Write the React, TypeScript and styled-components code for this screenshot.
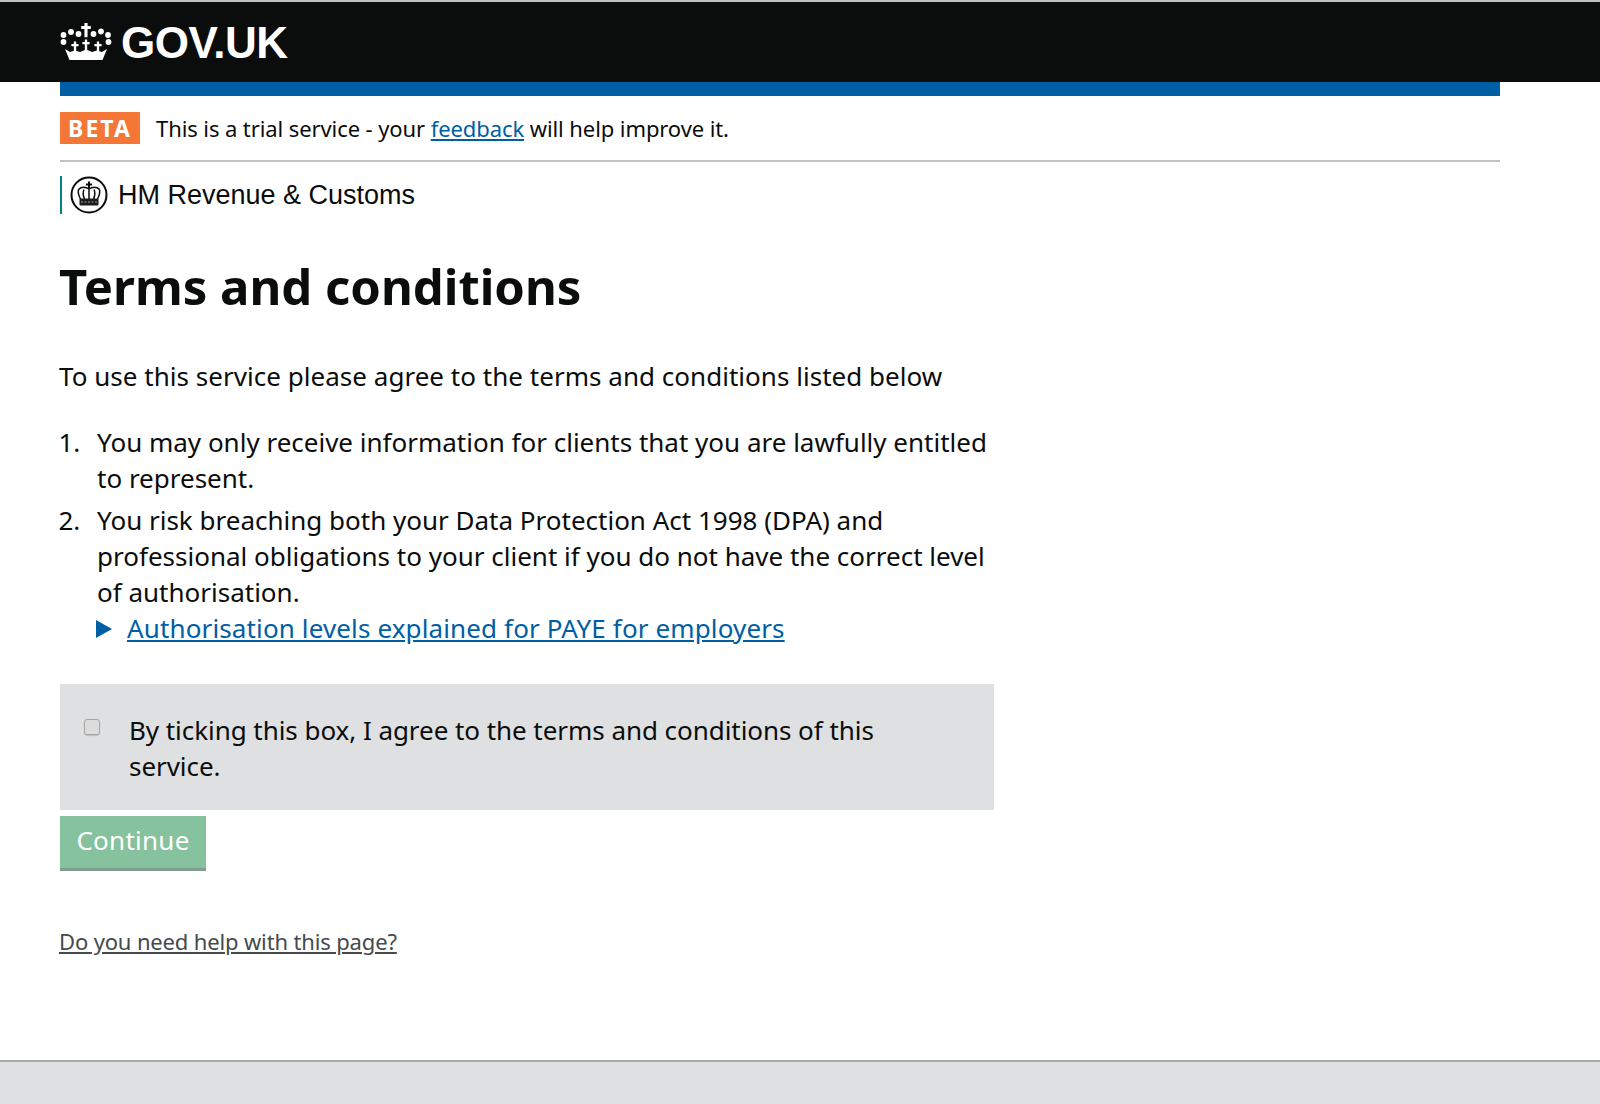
import React from "react";
import styled, { createGlobalStyle } from "styled-components";

const Global = createGlobalStyle`
  html, body { margin: 0; padding: 0; background: #fff; }
  body { font-family: "Noto Sans", "Liberation Sans", sans-serif; color: #0b0c0c; }
`;
const Page = styled.div`
  height: 1104px;
  display: flex;
  flex-direction: column;
  overflow: hidden;
`;
const Header = styled.header`
  height: 80px;
  background: #0b0c0c;
  border-top: 2px solid #bfc1c3;
  display: flex;
  align-items: center;
  padding-left: 60px;
  gap: 9px;
`;
const Wordmark = styled.span`
  color: #fff;
  font-family: "Liberation Sans", sans-serif;
  font-weight: 700;
  font-size: 44px;
  line-height: 1;
  letter-spacing: -0.5px;
  padding-top: 2px;
`;
const Container = styled.main`
  width: 1440px;
  margin-left: 60px;
  flex: 1;
`;
const BlueBar = styled.div`
  height: 14px;
  background: #005ea5;
`;
const Phase = styled.div`
  height: 66px;
  padding-top: 16px;
  box-sizing: border-box;
  border-bottom: 2px solid #bfc1c3;
  display: flex;
  align-items: flex-start;
  gap: 16px;
`;
const Tag = styled.strong`
  width: 80px;
  height: 32px;
  background: #f47738;
  color: #fff;
  font-size: 23px;
  font-weight: 700;
  line-height: 32px;
  letter-spacing: 2px;
  text-align: center;
`;
const PhaseText = styled.span`
  font-size: 22px;
  line-height: 32px;
  letter-spacing: -0.09px;
`;
const Link = styled.a`
  color: #005ea5;
  text-decoration: underline;
`;
const Org = styled.div`
  margin-top: 14px;
  height: 38px;
  border-left: 2px solid #00857d;
  display: flex;
  align-items: center;
  padding-left: 8px;
  gap: 10px;
  font-family: "Liberation Sans", sans-serif;
  font-size: 27px;
`;
const Title = styled.h1`
  margin: 44px 0 0 -1px;
  font-size: 49px;
  line-height: 56px;
  font-weight: 700;
`;
const Content = styled.div`
  width: 934px;
`;
const Intro = styled.p`
  margin: 44px 0 0 -1px;
  font-size: 26px;
  line-height: 36px;
  letter-spacing: 0.03px;
`;
const Steps = styled.ol`
  margin: 30px 0 0;
  padding: 0 0 0 27px;
  font-size: 26px;
  line-height: 36px;
`;
const Step = styled.li`
  margin-bottom: 6px;
  padding-left: 10px;
`;
const Details = styled.div`
  display: flex;
  align-items: center;
  gap: 15px;
  letter-spacing: 0.13px;
`;
const Triangle = styled.span`
  width: 0;
  height: 0;
  margin: 2px 0 0 -1px;
  border-left: 16px solid #005ea5;
  border-top: 9px solid transparent;
  border-bottom: 9px solid transparent;
`;
const Panel = styled.label`
  margin-top: 38px;
  height: 126px;
  box-sizing: border-box;
  background: #dee0e2;
  padding: 28px 60px 0 24px;
  display: flex;
  gap: 29px;
  font-size: 26px;
  line-height: 36px;
  letter-spacing: -0.05px;
`;
const Box = styled.input`
  appearance: none;
  box-sizing: border-box;
  width: 16px;
  height: 16px;
  margin: 7px 0 0;
  flex: none;
  background: #dcdcdc;
  border: 1px solid #a6a6a6;
  border-radius: 3px;
  box-shadow: 0 1px 1px rgba(0, 0, 0, 0.15);
`;
const Button = styled.button`
  display: block;
  margin-top: 6px;
  width: 146px;
  height: 55px;
  box-sizing: border-box;
  border: 0;
  border-bottom: 3px solid #7f9e8d;
  background: #85c29d;
  color: #fff;
  font-family: inherit;
  font-size: 26px;
  letter-spacing: 0.25px;
  padding: 0 0 4px;
`;
const Help = styled.a`
  display: block;
  margin-top: 56px;
  margin-left: -1px;
  font-size: 22px;
  line-height: 28px;
  letter-spacing: -0.15px;
  color: #454a4c;
  text-decoration: underline;
`;
const Footer = styled.footer`
  height: 42px;
  background: #dee0e2;
  border-top: 2px solid #a1acb2;
`;

const Cross = ({ x, y, s = 1 }: { x: number; y: number; s?: number }) => (
  <path
    transform={`translate(${x} ${y}) scale(${s})`}
    d="M-1.300-6h2.600v2.600H4v2.600H1.300V6h-2.600V-.8H-4v-2.600h2.700z"
  />
);
const Crown = () => (
  <svg width="52" height="38" viewBox="0 0 52 38" fill="#fff" aria-hidden="true">
    <Cross x={26} y={7} s={1.2} />
    {[[3.5, 12], [11, 9], [18.5, 11], [33.5, 11], [41, 8.5], [48, 12], [3.5, 19], [48.5, 19]].map(([cx, cy]) => (
      <circle key={`${cx}-${cy}`} cx={cx} cy={cy} r="2.900" />
    ))}
    <Cross x={15} y={24} s={0.9} />
    <Cross x={26} y={22} s={0.9} />
    <Cross x={38} y={24} s={0.9} />
    <path d="M5 26l5 3 5-1.500 5 1.500 6-2.500 6 2.500 5-1.500 5 1.500 5-3-4.500 11H9.500z" />
  </svg>
);
const Roundel = () => (
  <svg width="38" height="38" viewBox="0 0 38 38" aria-hidden="true">
    <circle cx="19" cy="19" r="17.500" fill="#fff" stroke="#0b0c0c" strokeWidth="2" />
    <path d="M18 5.500h2v2h2v2h-2v3h-2v-3h-2v-2h2z" fill="#0b0c0c" />
    <path
      d="M19 13c-3-2.500-8-2.500-10 0-1.500 2-.5 6 1.500 10M19 13c3-2.500 8-2.500 10 0 1.500 2 .5 6-1.500 10M19 13v10M14 13.500c-1.500 3-1 6 .5 9.500M24 13.500c1.500 3 1 6-.5 9.500"
      fill="none"
      stroke="#0b0c0c"
      strokeWidth="1.500"
    />
    <rect x="9.500" y="22.500" width="19" height="7" rx="1" fill="#1d1d1d" />
    <path d="M11 26h16" stroke="#9a9a9a" strokeWidth="1" strokeDasharray="2 1.500" />
  </svg>
);

export default function App() {
  return (
    <Page>
      <Global />
      <Header>
        <Crown />
        <Wordmark>GOV.UK</Wordmark>
      </Header>
      <Container>
        <BlueBar />
        <Phase>
          <Tag>BETA</Tag>
          <PhaseText>
            This is a trial service - your <Link href="#">feedback</Link> will help improve it.
          </PhaseText>
        </Phase>
        <Org>
          <Roundel />
          HM Revenue &amp; Customs
        </Org>
        <Title>Terms and conditions</Title>
        <Content>
          <Intro>To use this service please agree to the terms and conditions listed below</Intro>
          <Steps>
            <Step>You may only receive information for clients that you are lawfully entitled to represent.</Step>
            <Step>
              You risk breaching both your Data Protection Act 1998 (DPA) and professional obligations to your client if you do not have the correct level of authorisation.
              <Details>
                <Triangle />
                <Link href="#">Authorisation levels explained for PAYE for employers</Link>
              </Details>
            </Step>
          </Steps>
          <Panel>
            <Box type="checkbox" />
            <span>By ticking this box, I agree to the terms and conditions of this service.</span>
          </Panel>
          <Button type="button">Continue</Button>
          <Help href="#">Do you need help with this page?</Help>
        </Content>
      </Container>
      <Footer />
    </Page>
  );
}
